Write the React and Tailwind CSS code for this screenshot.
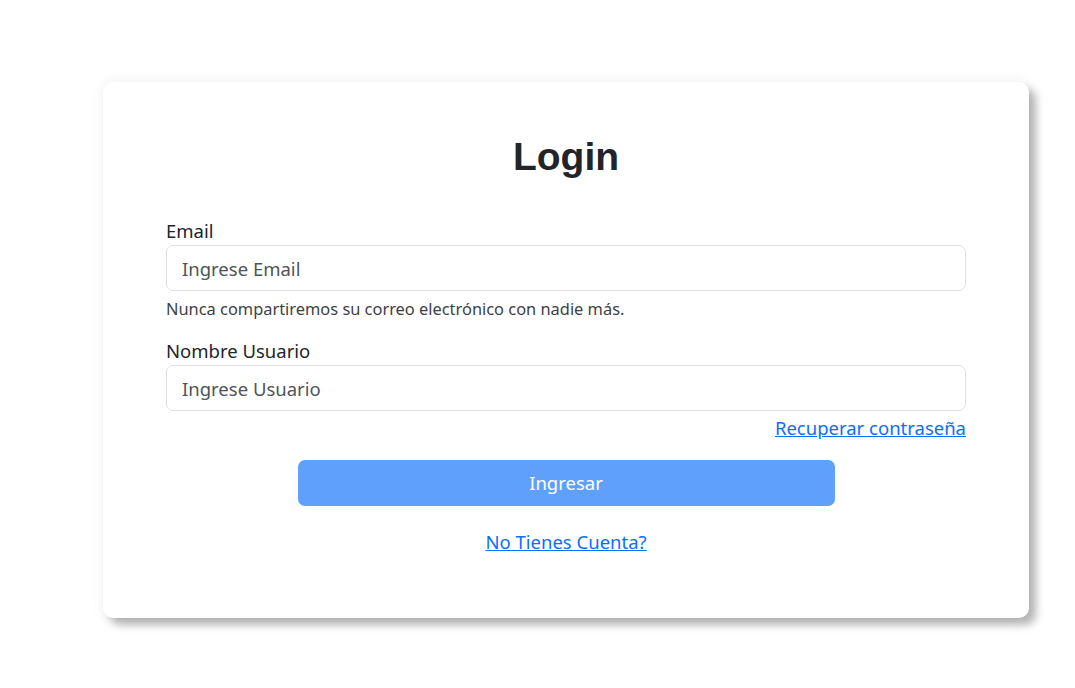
export default function App() {
  const font = { fontFamily: '"Noto Sans", "Open Sans", sans-serif' };
  return (
    <div className="min-h-[688px] w-[1075px] bg-white pt-[82px]" style={font}>
      <div className="ml-[103px] w-[926px] h-[536px] rounded-[10px] bg-white px-[63px] pt-[136px] shadow-[0_0_14px_rgba(0,0,0,0.07),7px_7px_8px_rgba(0,0,0,0.28)] relative">
        <h1
          className="absolute left-0 right-0 top-[51px] text-center text-[39px] font-bold leading-[48px] text-[#212529]"
          style={{ fontFamily: '"Liberation Sans", Arial, sans-serif' }}
        >
          Login
        </h1>
        <form className="flex flex-col">
          <label className="text-[18.5px] leading-[26px] text-[#212529]">Email</label>
          <input
            className="mt-[1px] h-[46px] w-full rounded-[7px] border border-[#dee2e6] px-[15px] text-[18.5px] text-[#212529] placeholder:text-[#505459] outline-none"
            placeholder="Ingrese Email"
          />
          <p className="mt-[6px] text-[16.4px] leading-[24px] text-[#3d4145]">
            Nunca compartiremos su correo electrónico con nadie más.
          </p>
          <label className="mt-[17px] text-[18.5px] leading-[26px] text-[#212529]">Nombre Usuario</label>
          <input
            className="mt-[1px] h-[46px] w-full rounded-[7px] border border-[#dee2e6] px-[15px] text-[18.5px] text-[#212529] placeholder:text-[#505459] outline-none"
            placeholder="Ingrese Usuario"
          />
          <div className="mt-[4px] flex justify-end">
            <a href="#" className="text-[18.5px] leading-[26px] text-[#0d6efd] underline">
              Recuperar contraseña
            </a>
          </div>
          <div className="mt-[19px] flex justify-center">
            <button
              type="button"
              className="h-[46px] w-[537px] rounded-[7px] bg-[#5fa0fd] text-[18.5px] text-white"
            >
              Ingresar
            </button>
          </div>
          <div className="mt-[23px] flex justify-center">
            <a href="#" className="text-[18.5px] leading-[26px] text-[#0d6efd] underline">
              No Tienes Cuenta?
            </a>
          </div>
        </form>
      </div>
    </div>
  );
}
